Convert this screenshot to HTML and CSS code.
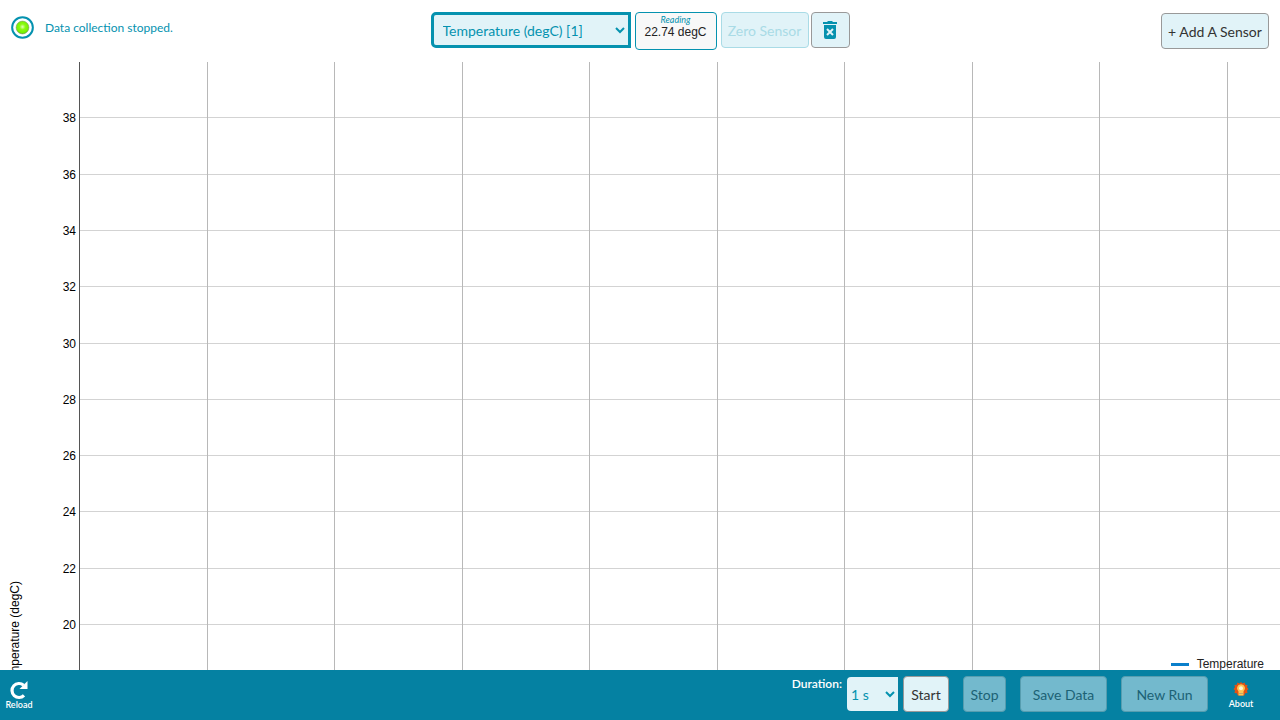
FILE: index.html
```html
<!DOCTYPE html>
<html lang="en">
<head>
<meta charset="utf-8">
<title>Sensor Data Collection</title>
<link rel="stylesheet" href="styles.css">
</head>
<body>
<header class="topbar">
  <div class="status">
    <svg class="status-light" width="23" height="23" viewBox="0 0 24 24" aria-hidden="true">
      <defs>
        <radialGradient id="glow" cx="50%" cy="45%" r="55%">
          <stop offset="0" stop-color="#e4ffb8"/>
          <stop offset="0.4" stop-color="#8cfa12"/>
          <stop offset="0.8" stop-color="#78f200"/>
          <stop offset="1" stop-color="#5cc800"/>
        </radialGradient>
      </defs>
      <circle cx="12" cy="12" r="10.8" fill="#fff" stroke="#0592af" stroke-width="2.1"/>
      <circle cx="12" cy="12" r="6.7" fill="url(#glow)" stroke="#7d9d6b" stroke-width="0.6"/>
    </svg>
    <span>Data collection stopped.</span>
  </div>
  <div class="sensor">
    <select class="sensor-select" aria-label="Sensor"><option>Temperature (degC) [1]</option></select>
    <div class="reading"><span class="reading-label">Reading</span><span>22.74 degC</span></div>
    <button class="btn btn-zero" disabled>Zero Sensor</button>
    <button class="btn btn-delete" aria-label="Remove sensor">
      <svg width="14" height="18" viewBox="0 0 14 18" aria-hidden="true">
        <path fill="#0592af" d="M0 1H4L5 0H9L10 1H14V3H0ZM1 4H13V16Q13 18 11 18H3Q1 18 1 16Z"/>
        <path stroke="#e1f3f8" stroke-width="2" d="M4 8L10 14M10 8L4 14"/>
      </svg>
    </button>
  </div>
  <button class="btn btn-add">+ Add A Sensor</button>
</header>

<main class="chart">
  <svg class="plot" role="img" aria-label="Temperature chart">
    <g class="grid-h">
      <path d="M80 55.5H4000M80 112.5H4000M80 168.5H4000M80 224.5H4000M80 281.5H4000M80 337.5H4000M80 393.5H4000M80 449.5H4000M80 506.5H4000M80 562.5H4000"/>
    </g>
    <g class="grid-v">
      <path d="M207.5 0V2000M334.5 0V2000M462.5 0V2000M589.5 0V2000M717.5 0V2000M844.5 0V2000M972.5 0V2000M1099.5 0V2000M1227.5 0V2000"/>
    </g>
    <path class="axis" d="M79.5 0V2000"/>
    <g class="ticks">
      <text x="76" y="60">38</text>
      <text x="76" y="117">36</text>
      <text x="76" y="173">34</text>
      <text x="76" y="229">32</text>
      <text x="76" y="286">30</text>
      <text x="76" y="342">28</text>
      <text x="76" y="398">26</text>
      <text x="76" y="454">24</text>
      <text x="76" y="511">22</text>
      <text x="76" y="567">20</text>
    </g>
    <text class="axis-title" transform="translate(19 519) rotate(-90)">Temperature (degC)</text>
  </svg>
  <div class="legend"><span class="legend-line"></span>Temperature</div>
</main>

<footer class="bottombar">
  <button class="icon-btn">
    <svg width="20" height="20" viewBox="0 0 20 20" aria-hidden="true">
      <path fill="none" stroke="#fff" stroke-width="3.2" d="M15 15.4A7 7 0 1 1 14.6 5.2"/>
      <path fill="#fff" d="M18.5 1V9H10.5Z"/>
    </svg>
    <span>Reload</span>
  </button>
  <div class="controls">
    <label class="duration-label" for="duration">Duration:</label>
    <select class="duration" id="duration"><option>1 s</option></select>
    <button class="btn btn-start">Start</button>
    <button class="btn btn-stop" disabled>Stop</button>
    <button class="btn btn-wide" disabled>Save Data</button>
    <button class="btn btn-wide" disabled>New Run</button>
  </div>
  <button class="icon-btn about">
    <svg width="16" height="16" viewBox="0 0 16 16" aria-hidden="true">
      <path fill="#e45313" d="M8 1L9.5 2.5L11.5 1.5L12.3 3.7L14.5 4L14 6.2L15.5 8L14 9.5L14.5 12L12.2 12.3L11.2 14.5H4.8L3.8 12.3L1.5 12L2 9.5L.5 8L2 6.2L1.5 4L3.7 3.7L4.5 1.5L6.5 2.5Z"/>
      <path fill="#ffc653" d="M8 3.3A4.1 4.1 0 0 1 10.5 10.6V14.5H5.5V10.6A4.1 4.1 0 0 1 8 3.3Z"/>
      <circle cx="8" cy="7.3" r="2" fill="#fff5d3"/>
      <path stroke="#c6a76b" stroke-width="1" d="M6 12.5H10"/>
    </svg>
    <span>About</span>
  </button>
</footer>
</body>
</html>
```
FILE: styles.css
```css
* { box-sizing: border-box; }

body {
  margin: 0;
  height: 100vh;
  display: flex;
  flex-direction: column;
  overflow: hidden;
  background: #fff;
  color: #222;
  font-family: Lato, "Liberation Sans", sans-serif;
  font-size: 14px;
}

button, select { font: inherit; margin: 0; }

.topbar {
  display: grid;
  grid-template-columns: 1fr auto 1fr;
  align-items: start;
  height: 62px;
  padding: 12px 11px 0 11px;
}

.status {
  display: flex;
  align-items: center;
  gap: 11px;
  padding-top: 4px;
  color: #0592af;
  font-size: 12px;
}

.sensor { display: flex; gap: 4px; align-items: flex-start; }

.sensor-select {
  width: 200px;
  height: 36px;
  padding: 0 0 0 5px;
  border: 3px solid #0592af;
  border-radius: 5px 0 0 5px;
  background-color: #e1f3f8;
  color: #0592af;
}

.reading {
  display: flex;
  flex-direction: column;
  align-items: center;
  width: 82px;
  height: 38px;
  border: 1px solid #0592af;
  border-radius: 4px;
  background: #f8f8f8;
  font: 12px/13px "Liberation Sans", sans-serif;
}

.reading-label {
  color: #0592af;
  font: italic 9px/13px Lato, sans-serif;
}

.btn {
  height: 36px;
  padding: 0 6px;
  border: 1px solid #999;
  border-radius: 4px;
  background: #e1f3f8;
  color: #333;
  white-space: nowrap;
}

.btn-zero {
  width: 88px;
  border-color: #a9dbe6;
  color: #a9dbe6;
}

.btn-delete {
  display: flex;
  align-items: center;
  justify-content: center;
  width: 39px;
  margin-left: -2px;
}

.btn-add { justify-self: end; width: 108px; margin-top: 1px; }

.chart { position: relative; flex: 1; min-height: 0; overflow: hidden; }

.plot {
  display: block;
  width: 100%;
  height: 100%;
  font: 12px "Liberation Sans", sans-serif;
}

.grid-h { stroke: #d3d3d3; }
.grid-v { stroke: #b8b8b8; }
.axis { stroke: #555; }
.ticks { text-anchor: end; fill: #000; }
.axis-title { text-anchor: end; fill: #000; }

.legend {
  position: absolute;
  right: 16px;
  bottom: -1px;
  display: flex;
  align-items: center;
  gap: 8px;
  font: 12px/14px "Liberation Sans", sans-serif;
}

.legend-line { width: 18px; height: 3px; background: #0a7fcb; }

.bottombar {
  display: flex;
  align-items: flex-start;
  height: 50px;
  padding: 6px 18px 0 0;
  background: #0581a2;
}

.icon-btn {
  display: flex;
  flex-direction: column;
  align-items: center;
  width: 38px;
  padding: 4px 0 0;
  border: 0;
  background: none;
  color: #fff;
  font-size: 9px;
  line-height: 10px;
  font-weight: 600;
}

.about { width: 42px; padding-top: 5px; gap: 2px; }

.controls {
  display: flex;
  gap: 14px;
  margin-left: auto;
  margin-right: 12px;
}

.duration-label {
  margin-right: -9px;
  color: #fff;
  font-size: 12px;
  line-height: 16px;
  font-weight: 600;
}

.duration {
  width: 51px;
  height: 34px;
  margin: 1px -9px 0 0;
  padding: 0;
  border: 0;
  border-radius: 4px 0 0 4px;
  background-color: #e1f3f8;
  color: #0592af;
}

.btn-start { width: 46px; }
.btn-stop { width: 43px; }
.btn-wide { width: 87px; }

.bottombar .btn:disabled {
  border-color: #569daf;
  background: #73b9cd;
  color: #1c6275;
}
```
